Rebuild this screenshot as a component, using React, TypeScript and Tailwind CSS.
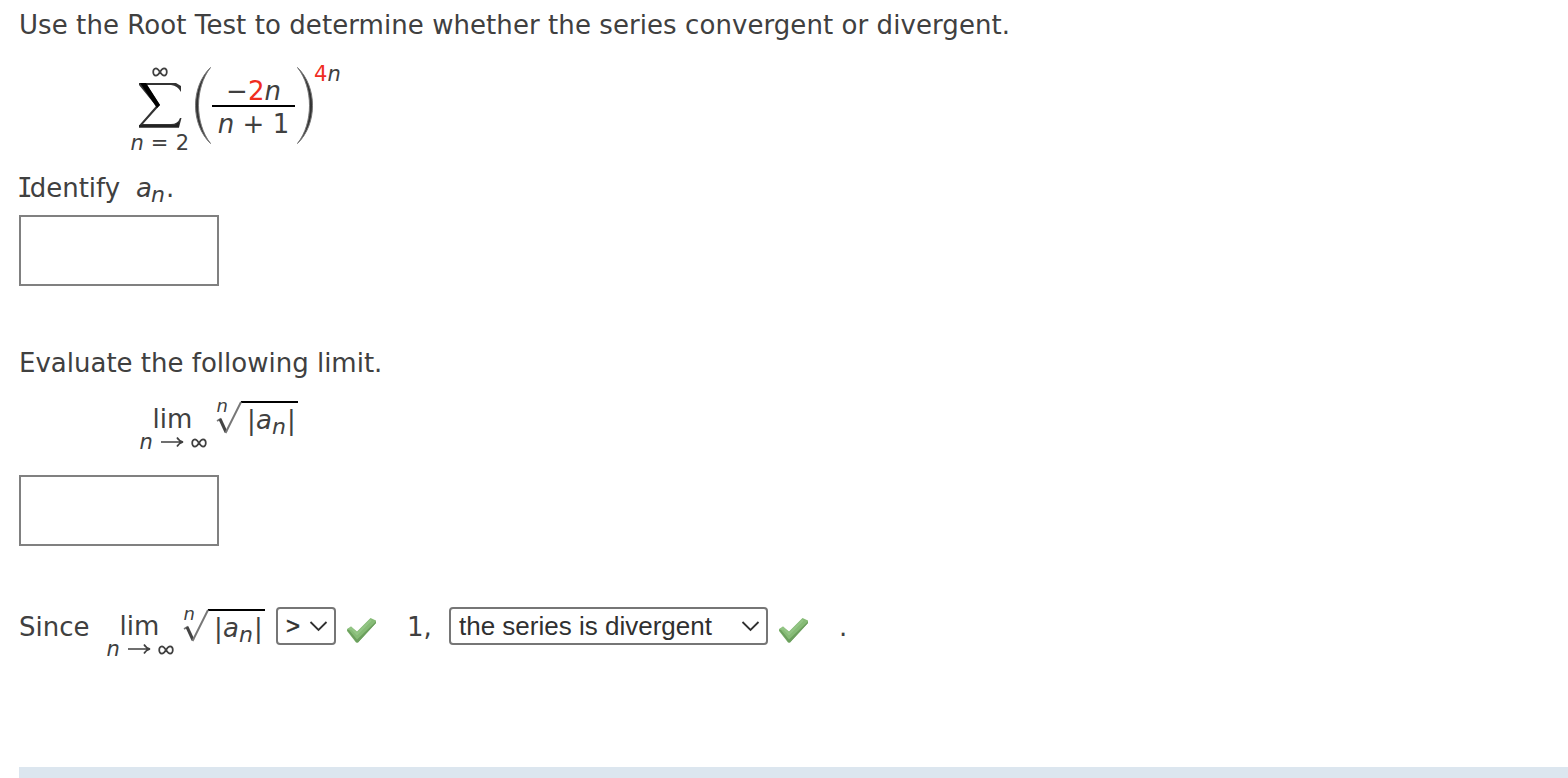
import type { ReactNode } from "react";

function Row({ className, children }: { className: string; children?: ReactNode }) {
  return <div className={`flex items-start whitespace-pre ${className}`}>{children}</div>;
}

function AnswerBox() {
  return <div className="ml-[19px] h-[71px] w-[200px] border-2 border-[#808080] bg-white" />;
}

function Infinity({ className }: { className: string }) {
  return (
    <svg className={`h-[10px] w-[16px] ${className}`} viewBox="0 0 17 11" fill="none" stroke="#404040" strokeWidth="1.9">
      <path d="M8.5 5.5C6.5 2.5 5.5 1.5 4 1.5C0 1.5 0 9.5 4 9.5C6 9.5 7 8 8.5 5.5C10 3 11 1.5 13 1.5C17 1.5 17 9.5 13 9.5C11.5 9.5 10.5 8.5 8.5 5.5Z" />
    </svg>
  );
}

function Limit() {
  return (
    <div className="flex w-[70px] flex-col">
      <span className="pl-[13.5px] text-[26px] leading-[32px]">lim</span>
      <div className="-mt-px flex text-[21px] leading-[17px]">
        <i className="w-[21px] pl-[0.5px]">n</i>
        <svg className="mt-[2px] h-[12px] w-[24px]" viewBox="0 0 24 12" fill="none" stroke="#404040" strokeWidth="1.6">
          <path d="M1 6H22M17 1.5Q19 5 23 6Q19 7 17 10.5" />
        </svg>
        <Infinity className="ml-[7px] mt-[4px]" />
      </div>
    </div>
  );
}

function NthRoot() {
  return (
    <div className="flex">
      <div className="relative h-[34px] w-[25px]">
        <i className="absolute left-[0.5px] top-[-5px] text-[18px] leading-[20px]">n</i>
        <svg className="h-[34px] w-[26px]" viewBox="0 0 26 34" fill="none">
          <path d="M1 20L5 17.5" stroke="#777" strokeWidth="1.6" />
          <path d="M4 18L10 31" stroke="#444" strokeWidth="3" />
          <path d="M9.5 32L25 1" stroke="#777" strokeWidth="2" />
        </svg>
      </div>
      <div className="flex h-[38px] w-[57px] border-t-2 border-black pl-[6px] text-[26px] leading-[34px]">
        <span className="w-[9px]">|</span>
        <i className="w-[16px]">a</i>
        <i className="mt-[7px] w-[15px] text-[22px]">n</i>
        <span>|</span>
      </div>
    </div>
  );
}

function Select({ label, className, labelClass }: { label: string; className: string; labelClass: string }) {
  return (
    <button
      className={`flex h-[38px] items-center justify-between rounded-[4px] border-2 border-[#767676] bg-white pl-[8px] pr-[6px] font-['Liberation_Sans',sans-serif] tracking-normal text-[#303030] ${className}`}
    >
      <span className={labelClass}>{label}</span>
      <svg className="h-[12px] w-[19px]" viewBox="0 0 19 12" fill="none" stroke="#303030" strokeWidth="1.8">
        <path d="M1.5 2L9.5 10L17.5 2" />
      </svg>
    </button>
  );
}

function Check({ className }: { className: string }) {
  return (
    <svg className={`h-[27px] w-[31px] ${className}`} viewBox="0 0 31 27">
      <path d="M1 12L5 9.5L11 14.5L24.5 1L30 3.5V6L12 25.5H10L1 14Z" fill="#86bb76" />
      <path d="M1 13L10.5 25.5H12L30 6V4.5L11 22.5L3 13Z" fill="#6c9f5e" />
      <path d="M3.5 12.5L5 11L11 17L25 3" fill="none" stroke="#93c585" strokeWidth="2" />
    </svg>
  );
}

function Paren({ className }: { className: string }) {
  return (
    <svg className={`h-[77px] w-[16px] ${className}`} viewBox="0 0 16 77">
      <path d="M15.5 0.5C-4.5 20 -4.5 57 15.5 76.5C-0.5 56 -0.5 21 15.5 0.5Z" fill="#333" stroke="#777" strokeWidth="1" />
    </svg>
  );
}

export default function App() {
  return (
    <div className="h-[778px] w-full overflow-hidden bg-white font-['DejaVu_Sans',sans-serif] text-[26px] leading-[50px] text-[#404040]">
      <Row className="h-[50px] pl-[19px] tracking-[0.07px]">
        Use the Root Test to determine whether the series convergent or divergent.
      </Row>

      <Row className="h-[113px] pl-[130px]">
        <div className="flex w-[65px] flex-col pt-[17px]">
          <Infinity className="ml-[22px]" />
          <svg className="ml-[8px] mt-[5px] h-[46px] w-[44px]" viewBox="0 0 44 46">
            <path d="M1 1H38L43 4V10Q40 4 33 3H9L22 23L5 42H33Q40 42 42 36H43.5L41 45.5H1V43.5L18 24L1 3Z" fill="#333" />
            <path d="M2 1H8L22 23L19 26Z" fill="#000" />
            <path d="M1 43H37L41 40V45.5H1Z" fill="#222" />
          </svg>
          <span className="mt-[4px] pl-[0.5px] text-[21px] leading-[22px]">
            <i>n</i>
            <span className="tracking-[0.3px]"> = 2</span>
          </span>
        </div>
        <Paren className="mt-[17px]" />
        <div className="ml-[1px] flex w-[83px] flex-col items-center pt-[24px]">
          <span className="leading-[34px]">
            −<span className="text-[#f02d1f]">2</span>
            <i>n</i>
          </span>
          <div className="mt-[-3px] h-[2px] w-full bg-black" />
          <span className="leading-[34px]">
            <i>n</i> + 1
          </span>
        </div>
        <Paren className="ml-[2px] mt-[17px] -scale-x-100" />
        <span className="ml-[1px] mt-[9px] text-[21px] leading-[31px]">
          <span className="text-[#f02d1f]">4</span>
          <i>n</i>
        </span>
      </Row>

      <Row className="h-[52px] pl-[19px]">
        <span className="w-[117px]">
          <span className="-ml-[2px] -mr-[3px] font-['DejaVu_Sans_Mono',monospace]">I</span>dentify
        </span>
        <i className="w-[15px]">a</i>
        <i className="mt-[7px] w-[15px] text-[22px]">n</i>
        <span>.</span>
      </Row>
      <AnswerBox />

      <Row className="mt-[52px] h-[63px] pl-[19px]">Evaluate the following limit.</Row>

      <Row className="h-[74px] pl-[139px]">
        <div className="pt-[2px]">
          <Limit />
        </div>
        <div className="ml-[7px]">
          <NthRoot />
        </div>
      </Row>
      <AnswerBox />

      <Row className="mt-[56px] h-[165px] pl-[19px]">
        <span className="w-[87px]">Since</span>
        <div className="pt-[8px]">
          <Limit />
        </div>
        <div className="ml-[7px] pt-[7px]">
          <NthRoot />
        </div>
        <Select
          label=">"
          className="ml-[11px] mt-[5px] w-[60px]"
          labelClass="text-[24px] leading-[32px] [-webkit-text-stroke:0.5px]"
        />
        <Check className="ml-[10px] mt-[15px]" />
        <span className="ml-[30px] w-[42px]">1,</span>
        <Select
          label="the series is divergent"
          className="mt-[5px] w-[319px]"
          labelClass="text-[26px] leading-[32px]"
        />
        <Check className="ml-[10px] mt-[15px]" />
        <span className="ml-[30px]">.</span>
      </Row>

      <div className="ml-[19px] h-[11px] bg-[#dce6ef]" />
    </div>
  );
}
